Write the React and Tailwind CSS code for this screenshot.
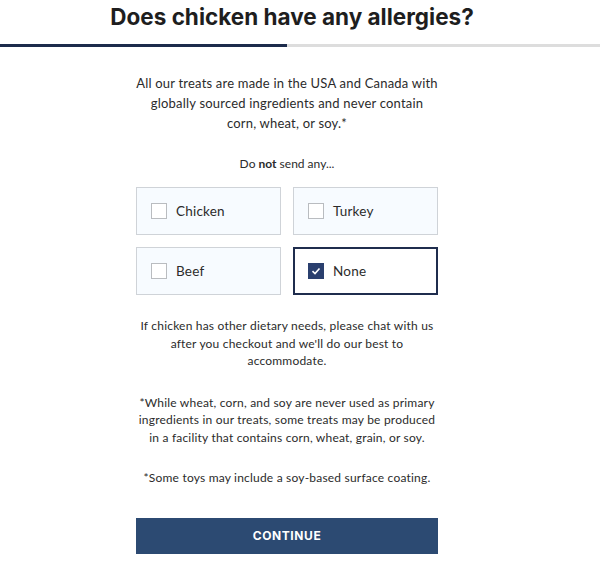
import React, { useState } from "react";

const options = ["Chicken", "Turkey", "Beef", "None"];

const App = () => {
  const [selected, setSelected] = useState("None");

  return (
    <div className="w-[600px] h-[573px] bg-white text-[#2b2b2b] font-['Lato',sans-serif] overflow-hidden">
      <h1 className="w-[584px] text-center font-['Inter',sans-serif] font-bold text-[22.5px] leading-[28px] pt-[3px] text-[#1e1e1e]">
        Does chicken have any allergies?
      </h1>

      <div className="flex mt-[13px] h-[3px]">
        <div className="w-[287px] bg-[#1c2b4b]" />
        <div className="flex-1 bg-[#dddddd]" />
      </div>

      <div className="w-[302px] ml-[136px] flex flex-col items-center">
        <p className="text-center text-[13px] leading-[20px] mt-[26px] whitespace-nowrap tracking-[0.2px]">
          All our treats are made in the USA and Canada with
          <br />
          globally sourced ingredients and never contain
          <br />
          corn, wheat, or soy.*
        </p>

        <p className="text-center text-[12px] leading-[16px] mt-[23px]">
          Do <span className="font-bold">not</span> send any...
        </p>

        <div className="grid grid-cols-2 gap-x-[12px] gap-y-[12px] w-full mt-[15px]">
          {options.map((opt) => {
            const on = selected === opt;
            return (
              <div
                key={opt}
                onClick={() => setSelected(opt)}
                className={
                  on
                    ? "h-[48px] flex items-center gap-[9px] px-[13px] border-2 border-[#1f2d4e] bg-white cursor-pointer"
                    : "h-[48px] flex items-center gap-[9px] px-[14px] border border-[#cfd3d8] bg-[#f7fbff] cursor-pointer"
                }
              >
                {on ? (
                  <span className="w-[16px] h-[16px] bg-[#2a3f6e] flex items-center justify-center">
                    <svg width="10" height="10" viewBox="0 0 10 10" fill="none">
                      <path d="M1.5 5.2 L4 7.5 L8.5 2.5" stroke="white" strokeWidth="1.6" />
                    </svg>
                  </span>
                ) : (
                  <span className="w-[16px] h-[16px] border border-[#b9bcc0] bg-white" />
                )}
                <span className="text-[13.5px] tracking-[0.2px]">{opt}</span>
              </div>
            );
          })}
        </div>

        <p className="text-center text-[12px] leading-[17.5px] mt-[22px] whitespace-nowrap tracking-[0.2px]">
          If chicken has other dietary needs, please chat with us
          <br />
          after you checkout and we'll do our best to
          <br />
          accommodate.
        </p>

        <p className="text-center text-[12px] leading-[17.5px] mt-[24px] whitespace-nowrap tracking-[0.2px]">
          *While wheat, corn, and soy are never used as primary
          <br />
          ingredients in our treats, some treats may be produced
          <br />
          in a facility that contains corn, wheat, grain, or soy.
        </p>

        <p className="text-center text-[12px] leading-[17.5px] mt-[23px] whitespace-nowrap tracking-[0.2px]">
          *Some toys may include a soy-based surface coating.
        </p>

        <button className="w-full h-[36px] mt-[31px] bg-[#2c4a72] text-white font-['Inter',sans-serif] font-bold text-[12px] tracking-[0.6px]">
          CONTINUE
        </button>
      </div>
    </div>
  );
};

export default App;
